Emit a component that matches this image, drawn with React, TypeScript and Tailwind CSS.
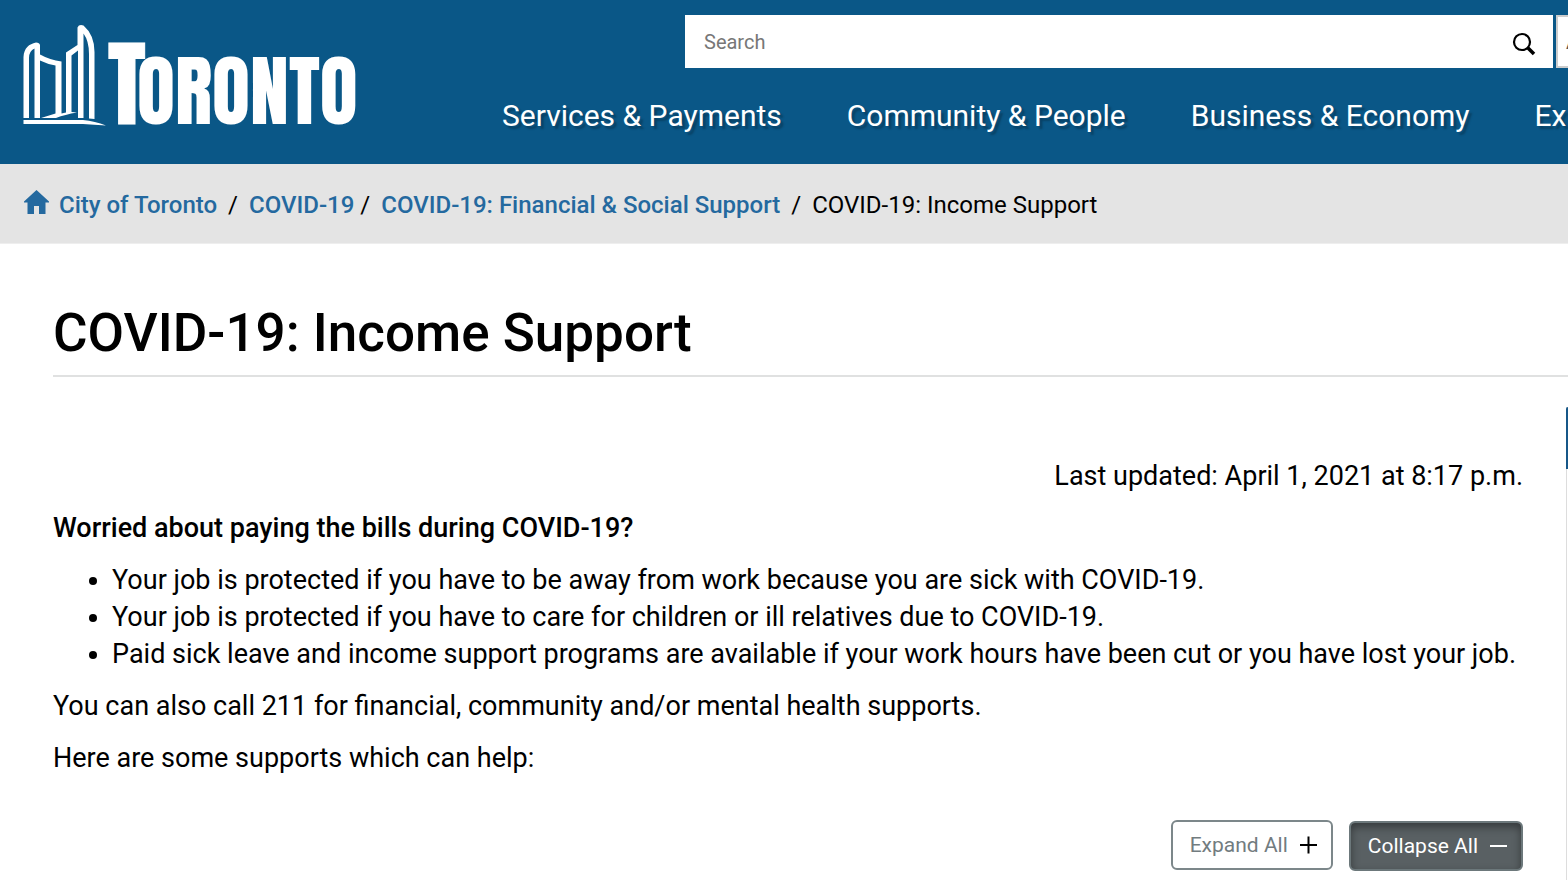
import React from 'react';

const navItems = ['Services & Payments', 'Community & People', 'Business & Economy', 'Explore & Enjoy'];

const facts = [
  'Your job is protected if you have to be away from work because you are sick with COVID-19.',
  'Your job is protected if you have to care for children or ill relatives due to COVID-19.',
  'Paid sick leave and income support programs are available if your work hours have been cut or you have lost your job.',
];

function Logo() {
  return (
    <svg width="336" height="104" viewBox="22 24 336 104" role="img" aria-label="City of Toronto" fill="#fff">
      <path d="M23.500 118V57C24 48 29 44 36 42.500Q39.500 42.500 40 45V54.500Q50 60 61.500 61.500V113.500L66 112.500V52.500L77.500 45V27.500Q79 24 83.500 25.500Q94.500 35 94.500 52V119L89 118.500V54Q89 41 83.500 33.500V118H78V50.500L71.500 55.500V112L77 112.500Q65 114.500 56 118H41L55.500 113.500V65.500Q47 64 40 60.500V118H34.500V48.500Q29 51 29 58V118Z" />
      <path d="M23.500 120H83Q95 121 106 125.500Q94 124.500 83 124H23.500Z" />
      <g fontFamily="Anton, 'Roboto Condensed', sans-serif">
        <text x="108" y="124" fontSize="95" stroke="#fff">T</text>
        <text x="137" y="124" fontSize="78">ORONTO</text>
      </g>
    </svg>
  );
}

function HomeIcon() {
  return (
    <svg width="25" height="26" viewBox="0 0 25 26" fill="#24699f" className="mb-1" aria-hidden="true">
      <path d="M12.500 0 25 11.500V12.500H21.500V24H15V16H10V24H3.500V12.500H0V11.500Z" />
    </svg>
  );
}

export default function App() {
  return (
    <div className="min-h-screen overflow-hidden bg-white font-['Roboto',sans-serif] text-black">
      <header className="flex h-[164px] justify-between gap-36 bg-[#0a5787] pl-[22px]">
        <a href="#home" className="shrink-0 pt-6"><Logo /></a>
        <div className="flex min-w-0 flex-1 flex-col pt-[15px]">
          <form className="ml-[183px] flex h-[53px] gap-[3px]">
            <div className="flex min-w-0 flex-1 bg-white">
              <input aria-label="Search" placeholder="Search" className="min-w-0 flex-1 px-[19px] text-[20px] outline-none placeholder:text-[#777]" />
              <button type="button" aria-label="Submit search" className="flex w-[58px] items-center justify-center pt-1">
                <svg width="24" height="24" viewBox="0 0 24 24" fill="none" stroke="#000" aria-hidden="true">
                  <circle cx="10" cy="10" r="8" strokeWidth="2.200" />
                  <path d="m15.500 15.500 6.500 6.500" strokeWidth="3.500" />
                </svg>
              </button>
            </div>
            <button type="button" className="-mr-[168px] w-[180px] shrink-0 border-2 border-[#ccc] bg-white px-2 text-left text-[20px] text-[#555]">A to Z</button>
          </form>
          <nav className="mt-[26px] flex gap-[65px] text-[30px] leading-[44px] whitespace-nowrap text-white [text-shadow:3px_3px_2px_rgba(0,0,0,0.25)]">
            {navItems.map((item) => <a key={item} href="#nav">{item}</a>)}
          </nav>
        </div>
      </header>

      <nav aria-label="Breadcrumb" className="flex h-20 items-center border-b border-[#eee] bg-[#e4e4e4] px-6 pt-[2px] text-[24px] font-medium whitespace-nowrap text-[#24699f]">
        <a href="#home" className="flex items-center gap-[10px]"><HomeIcon />City of Toronto</a>
        <span className="px-[11px] font-normal text-black">/</span>
        <a href="#covid">COVID-19</a>
        <span className="pr-[11px] pl-[6px] font-normal text-black">/</span>
        <a href="#financial">COVID-19: Financial &amp; Social Support</a>
        <span className="px-[11px] font-normal text-black">/</span>
        <span className="font-normal text-black">COVID-19: Income Support</span>
      </nav>

      <main className="pl-[53px]">
        <h1 className="border-b-2 border-[#e0e1e1] pt-[57px] pb-[10px] text-[53px] leading-[64px] font-medium">COVID-19: Income Support</h1>
        <div className="flex pt-[30px]">
          <article className="min-w-0 flex-1 pt-[51px] pr-[43px] pb-6 text-[27px] leading-[37px]">
            <p className="mb-[15px] text-right">Last updated: April 1, 2021 at 8:17 p.m.</p>
            <p className="mb-[15px] font-medium">Worried about paying the bills during COVID-19?</p>
            <ul className="mb-[15px] list-disc pl-[59px]">
              {facts.map((fact) => <li key={fact}>{fact}</li>)}
            </ul>
            <p className="mb-[15px]">You can also call 211 for financial, community and/or mental health supports.</p>
            <p>Here are some supports which can help:</p>
            <div className="mt-[43px] flex justify-end gap-4 text-[21px]">
              <button type="button" className="flex h-[50px] items-center gap-3 rounded-md border-2 border-[#7c878a] pr-[14px] pl-[17px] text-[#727c7f]">
                Expand All
                <svg width="17" height="18" viewBox="0 0 17 18" stroke="#000" strokeWidth="2" aria-hidden="true"><path d="M0 9h17M8.500 .500v17" /></svg>
              </button>
              <button type="button" className="mt-px flex h-[50px] items-center gap-3 rounded-md border-2 border-[#6c787b] bg-[#596063] pr-[14px] pl-[17px] text-white shadow-[inset_0_4px_8px_rgba(0,0,0,0.4)]">
                Collapse All
                <svg width="17" height="18" viewBox="0 0 17 18" stroke="#fff" strokeWidth="2" aria-hidden="true"><path d="M0 9h17" /></svg>
              </button>
            </div>
          </article>
          <aside className="w-[2px] border-l border-[#ddd]">
            <div className="-ml-px h-[62px] rounded-tl bg-[#165788]" />
          </aside>
        </div>
      </main>
    </div>
  );
}
